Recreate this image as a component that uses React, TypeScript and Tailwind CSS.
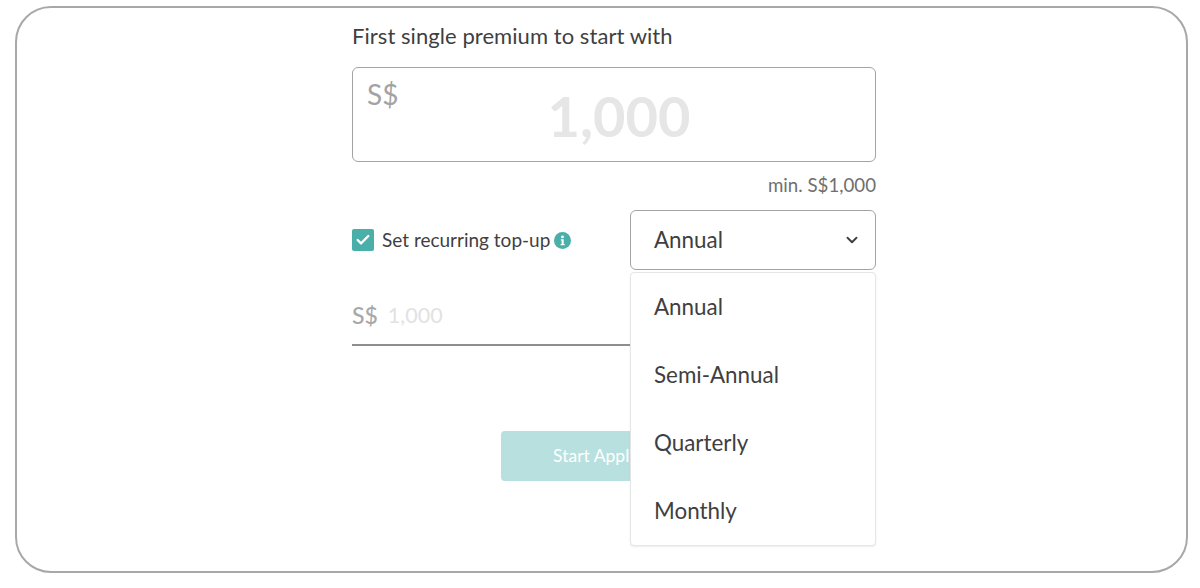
import { Check, ChevronDown } from "lucide-react";

const options = ["Annual", "Semi-Annual", "Quarterly", "Monthly"];

function InfoDot() {
  return (
    <svg width="17" height="17" viewBox="0 0 17 17" className="ml-[4px] shrink-0">
      <circle cx="8.5" cy="8.5" r="8.5" fill="#4aaea9" />
      <circle cx="8.5" cy="4.9" r="1.4" fill="#fff" />
      <path d="M6.8 7.3h2.9v4.6h1v1.3H6.6v-1.3h1V8.6h-.8z" fill="#fff" />
    </svg>
  );
}

export default function App() {
  return (
    <div className="h-[588px] w-[1200px] overflow-hidden bg-white pt-[6px] pl-[15px] font-['Lato',sans-serif] text-[#3f3f3f]">
      <div className="h-[567px] w-[1173px] rounded-[36px] border-2 border-[#a8a8a8] pl-[335px]">
        <div className="w-[524px]">
          <h2 className="pt-[14px] text-[22px] leading-[28px] tracking-[0.06px]">First single premium to start with</h2>

          <div className="relative mt-[17px] flex h-[95px] justify-center rounded-[6px] border border-[#a3a3a3] pt-[16px] pl-[10px]">
            <span className="absolute top-[8px] left-[14px] text-[28px] leading-[36px] text-[#a3a3a3]">S$</span>
            <span className="text-[56px] leading-[64px] font-bold text-[#e6e6e6]">1,000</span>
          </div>

          <p className="mt-[12px] text-right text-[18.7px] leading-[22px] text-[#6f6f6f]">min. S$1,000</p>

          <div className="relative mt-[14px]">
            <div className="flex items-start">
              <div className="flex h-[60px] w-[278px] items-center">
                <span className="flex h-[22px] w-[22px] items-center justify-center rounded-[2px] bg-[#4aaea9]">
                  <Check size={16} strokeWidth={3.5} className="text-white" />
                </span>
                <span className="ml-[8px] text-[19px] leading-[24px]">Set recurring top-up</span>
                <InfoDot />
              </div>
              <div className="flex h-[60px] w-[246px] items-center justify-between rounded-[6px] border border-[#a3a3a3] pr-[14px] pl-[23px] text-[22.4px]">
                <span>Annual</span>
                <ChevronDown size={18} strokeWidth={2.5} />
              </div>
            </div>

            <ul className="absolute top-[62px] left-[278px] z-10 w-[246px] rounded-[4px] border border-[#e6e6e6] bg-white shadow-[0_1px_2px_rgba(0,0,0,0.08)]">
              {options.map((o) => (
                <li key={o} className="flex h-[68px] items-center pl-[23px] text-[22.4px]">
                  {o}
                </li>
              ))}
            </ul>

            <div className="mt-[23px] flex h-[53px] items-center border-b-2 border-[#8f8f8f] pb-[6px]">
              <span className="text-[23px] font-medium text-[#a8a8a8]">S$</span>
              <span className="ml-[10px] text-[21.5px] text-[#e2e2e2]">1,000</span>
            </div>
          </div>

          <div className="mt-[85px] flex justify-center">
            <button className="h-[50px] w-[226px] rounded-[4px] bg-[#b8e0de] pl-[6px] text-[17.5px] text-white">Start Application</button>
          </div>
        </div>
      </div>
    </div>
  );
}
